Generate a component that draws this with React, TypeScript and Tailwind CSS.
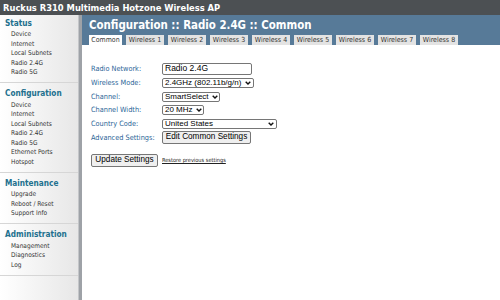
import React from "react";

const cond = { fontFamily: '"DejaVu Sans Condensed", "DejaVu Sans", sans-serif' };
const arial = { fontFamily: '"Liberation Sans", Arial, sans-serif' };

function Chevron() {
  return (
    <svg width="6" height="4" viewBox="0 0 6 4" className="ml-auto shrink-0">
      <polyline points="0.7,0.7 3,3 5.3,0.7" fill="none" stroke="#111" strokeWidth="1.4" />
    </svg>
  );
}

function Select({ value, w }: { value: string; w: string }) {
  return (
    <div
      className={`flex items-center h-[10px] border border-[#767676] rounded-[2px] bg-white pl-[2px] pr-[2px] text-[8px] leading-none text-black ${w}`}
      style={arial}
    >
      <span className="whitespace-nowrap">{value}</span>
      <span className="ml-[3px] flex-1 flex justify-end"><Chevron /></span>
    </div>
  );
}

const sections: { title: string; items: string[]; first?: boolean }[] = [
  { title: "Status", items: ["Device", "Internet", "Local Subnets", "Radio 2.4G", "Radio 5G"], first: true },
  {
    title: "Configuration",
    items: ["Device", "Internet", "Local Subnets", "Radio 2.4G", "Radio 5G", "Ethernet Ports", "Hotspot"],
  },
  { title: "Maintenance", items: ["Upgrade", "Reboot / Reset", "Support Info"] },
  { title: "Administration", items: ["Management", "Diagnostics", "Log"] },
];

const tabs = ["Common", "Wireless 1", "Wireless 2", "Wireless 3", "Wireless 4", "Wireless 5", "Wireless 6", "Wireless 7", "Wireless 8"];

function Label({ children }: { children: React.ReactNode }) {
  return (
    <div className="w-[71px] shrink-0 text-[7.3px] leading-none text-[#2b6597] whitespace-nowrap" style={cond}>
      {children}
    </div>
  );
}

export default function App() {
  return (
    <div className="w-[500px] h-[300px] overflow-hidden bg-white flex flex-col">
      <div className="h-[15px] bg-[#4c5053] flex items-center pl-[3px] shrink-0">
        <span className="text-white font-bold text-[9.3px] leading-none whitespace-nowrap" style={cond}>
          Ruckus R310 Multimedia Hotzone Wireless AP
        </span>
      </div>
      <div className="flex flex-1 min-h-0">
        <div className="w-[82px] shrink-0 flex">
          <div className="w-[78px] bg-linear-to-r from-white to-[#e7e7e7] flex flex-col">
            {sections.map((s) => (
              <div key={s.title} className={`border-b border-[#d6d6d6] pb-[5px] ${s.first ? "pt-[1.5px]" : "pt-[4px]"}`}>
                <div
                  className="h-[13px] flex items-center pl-[5px] text-[8.2px] font-bold text-[#22708e] leading-none whitespace-nowrap"
                  style={cond}
                >
                  {s.title}
                </div>
                {s.items.map((it) => (
                  <div
                    key={it}
                    className="h-[9.5px] flex items-center pl-[11px] text-[6.5px] text-[#333] leading-none whitespace-nowrap"
                    style={cond}
                  >
                    {it}
                  </div>
                ))}
              </div>
            ))}
          </div>
          <div className="w-[1px] bg-[#c4c6c9]" />
          <div className="w-[3px] bg-[#9ea2a7]" />
        </div>
        <div className="flex-1 flex flex-col min-w-0">
          <div className="h-[30px] bg-[#577a98] flex flex-col justify-between pl-[7px]">
            <div className="pt-[4.5px] text-white font-bold text-[11.4px] leading-none whitespace-nowrap" style={cond}>
              Configuration :: Radio 2.4G :: Common
            </div>
            <div className="flex gap-[4px] items-end">
              {tabs.map((t, i) => (
                <div
                  key={t}
                  className={`h-[10px] flex items-center justify-center text-[7px] leading-none text-[#333] whitespace-nowrap ${
                    i === 0 ? "bg-white w-[33px]" : "bg-[#e3e3e3] w-[38px]"
                  }`}
                  style={cond}
                >
                  {t}
                </div>
              ))}
            </div>
          </div>
          <div className="pl-[9px] pt-[16px] flex flex-col">
            <div className="h-[15px] flex items-center">
              <Label>Radio Network:</Label>
              <div
                className="w-[90px] h-[12px] border border-[#767676] rounded-[2px] flex items-center pl-[2px] text-[8.5px] leading-none text-black"
                style={arial}
              >
                Radio 2.4G
              </div>
            </div>
            <div className="h-[14px] flex items-center">
              <Label>Wireless Mode:</Label>
              <Select value="2.4GHz (802.11b/g/n)" w="w-[92px]" />
            </div>
            <div className="h-[13px] flex items-center">
              <Label>Channel:</Label>
              <Select value="SmartSelect" w="w-[58px]" />
            </div>
            <div className="h-[14px] flex items-center">
              <Label>Channel Width:</Label>
              <Select value="20 MHz" w="w-[42px]" />
            </div>
            <div className="h-[13px] flex items-center">
              <Label>Country Code:</Label>
              <Select value="United States" w="w-[115px]" />
            </div>
            <div className="h-[15px] flex items-center">
              <Label>Advanced Settings:</Label>
              <div
                className="w-[89px] h-[13px] border border-[#767676] rounded-[2px] bg-[#efefef] flex items-center justify-center text-[8.2px] leading-none text-black whitespace-nowrap"
                style={arial}
              >
                Edit Common Settings
              </div>
            </div>
            <div className="mt-[9px] flex items-center">
              <div
                className="w-[67px] h-[13px] border border-[#767676] rounded-[2px] bg-[#efefef] flex items-center justify-center text-[8.2px] leading-none text-black whitespace-nowrap"
                style={arial}
              >
                Update Settings
              </div>
              <span className="ml-[4px] text-[5.6px] leading-none text-[#222] underline whitespace-nowrap" style={cond}>
                Restore previous settings
              </span>
            </div>
          </div>
        </div>
      </div>
    </div>
  );
}
